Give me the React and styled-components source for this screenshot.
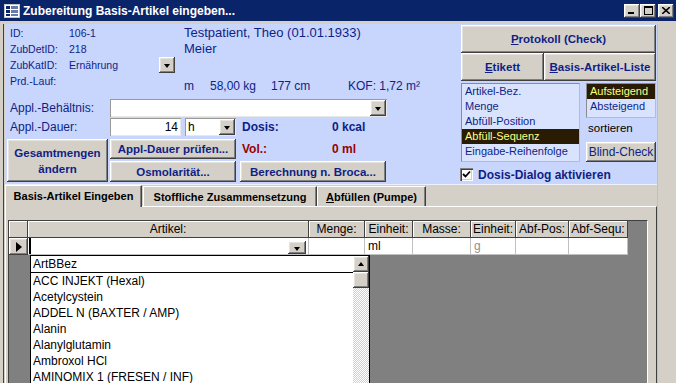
import React from "react";
import styled, { createGlobalStyle, css } from "styled-components";

const Global = createGlobalStyle`
  html, body { margin: 0; padding: 0; background: #d4d0c8; overflow: hidden; }
  * { box-sizing: border-box; }
`;

const NAVY = "#0f1f86";
const BLUE_BG = "#c8d5fd";
const LIST_BG = "#d9e3fd";

const raised = css`
  background: #d4d0c8;
  box-shadow: inset -1px -1px #404040, inset 1px 1px #fff, inset -2px -2px #808080, inset 2px 2px #e6e3dc;
`;

const Window = styled.div`
  width: 676px;
  height: 383px;
  overflow: hidden;
  display: flex;
  flex-direction: column;
  font-family: "Liberation Sans", Arial, sans-serif;
  background: #d4d0c8;
`;

const TitleBar = styled.div`
  height: 21px;
  flex: none;
  display: flex;
  align-items: center;
  padding: 0 2px 0 4px;
  background: #0a246a;
  color: #fff;
  font: bold 12px "Liberation Sans", Arial, sans-serif;
`;

const TitleText = styled.span`
  margin-left: 3px;
  flex: 1;
  white-space: nowrap;
`;

const WinButton = styled.div`
  ${raised};
  width: 16px;
  height: 14px;
  display: flex;
  align-items: center;
  justify-content: center;
  margin-left: ${(p) => p.$gap || 0}px;
`;

const Frame = styled.div`
  flex: 1;
  min-height: 0;
  display: flex;
  padding: 3px 0 0 3px;
`;

const Client = styled.div`
  width: 654px;
  border-left: 1px solid #404040;
  padding-left: 1px;
  display: flex;
  flex-direction: column;
`;

const RightStrip = styled.div`
  flex: 1;
  border-left: 1px solid #c4c0b8;
`;

const Header = styled.div`
  height: 161px;
  flex: none;
  display: flex;
  background: ${BLUE_BG};
  border-bottom: 1px solid #eef1fb;
`;

const LeftPane = styled.div`
  width: 456px;
  display: flex;
  flex-direction: column;
  padding-top: 1px;
`;

const InfoRow = styled.div`
  height: 73px;
  display: flex;
`;

const FieldGrid = styled.div`
  width: 174px;
  padding-left: 5px;
  display: grid;
  grid-template-columns: 59px 106px;
  grid-auto-rows: 16px;
  align-content: start;
  font-size: 10.5px;
  line-height: 16px;
  color: ${NAVY};
`;

const ValueCell = styled.div`
  display: flex;
  align-items: center;
  justify-content: space-between;
`;

const PatientCol = styled.div`
  margin-left: 5px;
  flex: 1;
  display: flex;
  flex-direction: column;
  color: ${NAVY};
  font-size: 13px;
  line-height: 16px;
  padding-bottom: 4px;
`;

const Stats = styled.div`
  margin-top: auto;
  display: flex;
  font-size: 12px;
`;

const Stat = styled.span`
  width: ${(p) => (p.$w ? `${p.$w}px` : "auto")};
  white-space: nowrap;
`;

const ApplRow = styled.div`
  height: 19px;
  display: flex;
  align-items: center;
`;

const Label = styled.span`
  width: 105px;
  padding-left: 5px;
  font-size: 12px;
  color: ${NAVY};
  white-space: nowrap;
`;

const Combo = styled.div`
  width: ${(p) => p.$w}px;
  height: 18px;
  margin-left: ${(p) => p.$ml || 0}px;
  display: flex;
  align-items: center;
  background: #fff;
  box-shadow: inset 1px 1px #9a9a9a, inset -1px -1px #e8e8e8;
`;

const ComboText = styled.span`
  flex: 1;
  padding: 0 3px;
  font-size: 12px;
  color: #000;
  text-align: ${(p) => p.$align || "left"};
`;

const DropBtn = styled.div`
  ${raised};
  width: ${(p) => p.$w || 16}px;
  height: ${(p) => p.$h || 16}px;
  flex: none;
  margin: ${(p) => p.$m ?? 1}px;
  display: flex;
  align-items: center;
  justify-content: center;
  &::after {
    content: "";
    border-left: 3.5px solid transparent;
    border-right: 3.5px solid transparent;
    border-top: 4px solid #000;
    margin-top: 2px;
  }
`;

const Value = styled.span`
  width: ${(p) => (p.$w ? `${p.$w}px` : "auto")};
  margin-left: ${(p) => p.$ml || 0}px;
  font-weight: bold;
  font-size: 12px;
  color: ${(p) => p.$color || NAVY};
  white-space: nowrap;
`;

const ButtonsRow = styled.div`
  margin-top: 3px;
  height: 43px;
  display: flex;
  padding-left: 2px;
  gap: 2px;
`;

const Stack = styled.div`
  width: ${(p) => p.$w}px;
  margin-left: ${(p) => p.$ml || 0}px;
  display: flex;
  flex-direction: column;
  justify-content: space-between;
`;

const Btn = styled.div`
  ${raised};
  width: ${(p) => (p.$w ? `${p.$w}px` : "auto")};
  height: ${(p) => p.$h}px;
  flex: none;
  margin-top: ${(p) => p.$mt || 0}px;
  display: flex;
  align-items: center;
  justify-content: center;
  text-align: center;
  font-weight: ${(p) => (p.$plain ? "normal" : "bold")};
  font-size: ${(p) => (p.$plain ? "12px" : "11.5px")};
  line-height: 16px;
  color: ${NAVY};
  white-space: nowrap;
`;

const VolRow = styled.div`
  height: 20px;
  display: flex;
  align-items: center;
  padding-left: 2px;
`;

const RightPane = styled.div`
  width: 195px;
  display: flex;
  flex-direction: column;
  padding-top: 1px;
`;

const Row = styled.div`
  display: flex;
  margin-top: ${(p) => p.$mt || 0}px;
`;

const ListBox = styled.div`
  width: ${(p) => p.$w}px;
  height: ${(p) => p.$h}px;
  flex: none;
  background: ${LIST_BG};
  border: 1px solid #8c8c8c;
  border-right-color: #bcbcbc;
  border-bottom-color: #bcbcbc;
`;

const ListItem = styled.div`
  height: 15px;
  line-height: 15px;
  padding-left: 3px;
  font-size: 11px;
  white-space: nowrap;
  color: ${(p) => (p.$sel ? "#ffff80" : NAVY)};
  background: ${(p) => (p.$sel ? "#2a1c04" : "transparent")};
`;

const SortCol = styled.div`
  width: 70px;
  margin-left: 6px;
  display: flex;
  flex-direction: column;
`;

const SortText = styled.div`
  height: 16px;
  margin-top: 2px;
  line-height: 16px;
  padding-left: 2px;
  font-size: 11.5px;
  color: #000;
`;

const CheckRow = styled.div`
  margin-top: 6px;
  height: 13px;
  display: flex;
  align-items: center;
  margin-left: -1px;
`;

const CheckBox = styled.div`
  width: 13px;
  height: 13px;
  flex: none;
  background: #fff;
  box-shadow: inset 1px 1px #808080, inset 2px 2px #404040, inset -1px -1px #fff, inset -2px -2px #d4d0c8;
  display: flex;
  align-items: center;
  justify-content: center;
`;

const CheckLabel = styled.span`
  margin-left: 5px;
  font-weight: bold;
  font-size: 12px;
  color: ${NAVY};
  white-space: nowrap;
`;

const TabStrip = styled.div`
  height: 21px;
  flex: none;
  display: flex;
  align-items: flex-end;
`;

const Tab = styled.div`
  width: ${(p) => p.$w}px;
  height: ${(p) => (p.$active ? 22 : 20)}px;
  margin-left: ${(p) => p.$ml || 0}px;
  margin-bottom: ${(p) => (p.$active ? -1 : 0)}px;
  position: relative;
  z-index: ${(p) => (p.$active ? 1 : 0)};
  background: #d4d0c8;
  border-top: 1px solid #fff;
  border-left: 1px solid #fff;
  border-right: 1px solid #404040;
  box-shadow: inset -1px 0 #808080;
  display: flex;
  align-items: center;
  justify-content: center;
  padding-bottom: ${(p) => (p.$active ? 2 : 0)}px;
  font-weight: bold;
  font-size: 11px;
  color: #000;
  white-space: nowrap;
`;

const Panel = styled.div`
  flex: 1;
  min-height: 0;
  display: flex;
  flex-direction: column;
  border-top: 1px solid #fff;
  border-left: 1px solid #fff;
  border-right: 1px solid #404040;
  padding: 13px 8px 0 2px;
`;

const Sheet = styled.div`
  flex: 1;
  position: relative;
  background: #808080;
  border-left: 1px solid #404040;
  border-top: 1px solid #404040;
  border-right: 1px solid #fff;
`;

const SheetGrid = styled.div`
  display: grid;
  grid-template-columns: 19px 281px 56px 48px 58px 45px 53px 59px;
  grid-auto-rows: 17px;
  width: max-content;
  font-size: 12px;
  line-height: 16px;
`;

const HeadCell = styled.div`
  background: #d4d0c8;
  border-right: 1px solid #404040;
  border-bottom: 1px solid #404040;
  box-shadow: inset 1px 1px #fff;
  text-align: center;
  color: #000;
  white-space: nowrap;
  overflow: hidden;
`;

const Cell = styled.div`
  background: #fff;
  border-right: 1px solid #c0c0c0;
  border-bottom: 1px solid #c0c0c0;
  padding-left: ${(p) => p.$pl ?? 3}px;
  color: ${(p) => p.$color || "#000"};
  white-space: nowrap;
  display: flex;
  align-items: center;
`;

const Selector = styled.div`
  ${raised};
  display: flex;
  align-items: center;
  justify-content: center;
  &::after {
    content: "";
    border-top: 5px solid transparent;
    border-bottom: 5px solid transparent;
    border-left: 6px solid #000;
    margin-left: 1px;
  }
`;

const Caret = styled.span`
  width: 2px;
  align-self: stretch;
  background: #000;
  margin-left: -1px;
  flex: none;
`;

const CellDrop = styled(DropBtn)`
  align-self: flex-end;
  margin: 0 2px 0 auto;
`;

const DropList = styled.div`
  position: absolute;
  left: 21px;
  top: 34px;
  width: 340px;
  height: 140px;
  display: flex;
  background: #fff;
  border: 1px solid #000;
  font-size: 12px;
  color: #000;
`;

const DropItems = styled.div`
  flex: 1;
`;

const DropHead = styled.div`
  height: 17px;
  line-height: 16px;
  padding-left: 2px;
  border-bottom: 1px solid #000;
`;

const DropItem = styled.div`
  height: 16px;
  line-height: 16px;
  padding-left: 2px;
  white-space: nowrap;
`;

const ScrollBar = styled.div`
  width: 16px;
  display: flex;
  flex-direction: column;
  background: repeating-conic-gradient(#fff 0 25%, #d4d0c8 0 50%) 0 0 / 2px 2px;
`;

const ScrollBtn = styled.div`
  ${raised};
  width: 16px;
  height: 16px;
  display: flex;
  align-items: center;
  justify-content: center;
  ${(p) =>
    p.$arrow &&
    css`
      &::after {
        content: "";
        border-left: 3.5px solid transparent;
        border-right: 3.5px solid transparent;
        border-bottom: 4px solid #000;
      }
    `}
`;

const FormIcon = () => (
  <svg width="16" height="14" viewBox="0 0 16 14">
    <rect x="0.5" y="0.5" width="15" height="13" fill="#fff" stroke="#c8c8c8" />
    <rect x="2" y="2" width="4" height="3" fill="#0a246a" />
    <rect x="7" y="2" width="7" height="3" fill="#6a7aa8" />
    <rect x="2" y="6" width="4" height="3" fill="#0a246a" />
    <rect x="7" y="6" width="7" height="3" fill="#6a7aa8" />
    <rect x="2" y="10" width="4" height="2" fill="#0a246a" />
    <rect x="7" y="10" width="7" height="2" fill="#6a7aa8" />
  </svg>
);

const articles = [
  "ACC INJEKT (Hexal)",
  "Acetylcystein",
  "ADDEL N (BAXTER / AMP)",
  "Alanin",
  "Alanylglutamin",
  "Ambroxol HCl",
  "AMINOMIX 1 (FRESEN / INF)",
];

const sortFields = ["Artikel-Bez.", "Menge", "Abfüll-Position", "Abfüll-Sequenz", "Eingabe-Reihenfolge"];

const columns = ["", "Artikel:", "Menge:", "Einheit:", "Masse:", "Einheit:", "Abf-Pos:", "Abf-Sequ:"];

export default function App() {
  return (
    <Window>
      <Global />
      <TitleBar>
        <FormIcon />
        <TitleText>Zubereitung Basis-Artikel eingeben...</TitleText>
        <WinButton>
          <svg width="8" height="7" viewBox="0 0 8 7">
            <rect x="0" y="5" width="6" height="2" fill="#000" />
          </svg>
        </WinButton>
        <WinButton>
          <svg width="9" height="9" viewBox="0 0 9 9">
            <rect x="0.5" y="0.5" width="8" height="8" fill="none" stroke="#000" />
            <rect x="0" y="0" width="9" height="2" fill="#000" />
          </svg>
        </WinButton>
        <WinButton $gap={2}>
          <svg width="8" height="7" viewBox="0 0 8 7">
            <path d="M0 0 L8 7 M8 0 L0 7" stroke="#000" strokeWidth="1.6" />
          </svg>
        </WinButton>
      </TitleBar>
      <Frame>
        <Client>
          <Header>
            <LeftPane>
              <InfoRow>
                <FieldGrid>
                  <span>ID:</span>
                  <span>106-1</span>
                  <span>ZubDetID:</span>
                  <span>218</span>
                  <span>ZubKatID:</span>
                  <ValueCell>
                    <span>Ernährung</span>
                    <DropBtn $m={0} />
                  </ValueCell>
                  <span>Prd.-Lauf:</span>
                  <span />
                </FieldGrid>
                <PatientCol>
                  <span>Testpatient, Theo (01.01.1933)</span>
                  <span>Meier</span>
                  <Stats>
                    <Stat $w={26}>m</Stat>
                    <Stat $w={61}>58,00 kg</Stat>
                    <Stat $w={77}>177 cm</Stat>
                    <Stat>KOF: 1,72 m²</Stat>
                  </Stats>
                </PatientCol>
              </InfoRow>
              <ApplRow>
                <Label>Appl.-Behältnis:</Label>
                <Combo $w={277}>
                  <ComboText />
                  <DropBtn />
                </Combo>
              </ApplRow>
              <ApplRow>
                <Label>Appl.-Dauer:</Label>
                <Combo $w={71}>
                  <ComboText $align="right">14</ComboText>
                </Combo>
                <Combo $w={51} $ml={4}>
                  <ComboText>h</ComboText>
                  <DropBtn />
                </Combo>
                <Value $w={90} $ml={6}>Dosis:</Value>
                <Value>0 kcal</Value>
              </ApplRow>
              <ButtonsRow>
                <Btn $w={101} $h={43}>
                  Gesamtmengen
                  <br />
                  ändern
                </Btn>
                <Stack $w={126}>
                  <Btn $h={20}>Appl-Dauer prüfen...</Btn>
                  <Btn $h={21}>Osmolarität...</Btn>
                </Stack>
                <Stack $w={146} $ml={2}>
                  <VolRow>
                    <Value $w={90} $color="#990000">Vol.:</Value>
                    <Value $color="#990000">0 ml</Value>
                  </VolRow>
                  <Btn $h={21}>Berechnung n. Broca...</Btn>
                </Stack>
              </ButtonsRow>
            </LeftPane>
            <RightPane>
              <Btn $h={28}>
                <span>
                  <u>P</u>rotokoll (Check)
                </span>
              </Btn>
              <Row>
                <Btn $w={83} $h={28}>
                  <span>
                    <u>E</u>tikett
                  </span>
                </Btn>
                <Btn $w={112} $h={28}>
                  <span>
                    <u>B</u>asis-Artikel-Liste
                  </span>
                </Btn>
              </Row>
              <Row $mt={2}>
                <ListBox $w={119} $h={79}>
                  {sortFields.map((f) => (
                    <ListItem key={f} $sel={f === "Abfüll-Sequenz"}>
                      {f}
                    </ListItem>
                  ))}
                </ListBox>
                <SortCol>
                  <ListBox $w={70} $h={35}>
                    <ListItem $sel>Aufsteigend</ListItem>
                    <ListItem>Absteigend</ListItem>
                  </ListBox>
                  <SortText>sortieren</SortText>
                  <Btn $h={20} $mt={6} $plain>
                    Blind-Check
                  </Btn>
                </SortCol>
              </Row>
              <CheckRow>
                <CheckBox>
                  <svg width="9" height="9" viewBox="0 0 9 9">
                    <path d="M1 4 L3.5 6.5 L8 1.5" fill="none" stroke="#000" strokeWidth="1.8" />
                  </svg>
                </CheckBox>
                <CheckLabel>Dosis-Dialog aktivieren</CheckLabel>
              </CheckRow>
            </RightPane>
          </Header>
          <TabStrip>
            <Tab $w={137} $active>
              Basis-Artikel Eingeben
            </Tab>
            <Tab $w={174} $ml={1}>
              Stoffliche Zusammensetzung
            </Tab>
            <Tab $w={109}>
              <span>
                <u>A</u>bfüllen (Pumpe)
              </span>
            </Tab>
          </TabStrip>
          <Panel>
            <Sheet>
              <SheetGrid>
                {columns.map((c, i) => (
                  <HeadCell key={i}>{c}</HeadCell>
                ))}
                <Selector />
                <Cell $pl={2}>
                  <Caret />
                  <CellDrop $w={18} $h={13} />
                </Cell>
                <Cell />
                <Cell>ml</Cell>
                <Cell />
                <Cell $color="#909090">g</Cell>
                <Cell />
                <Cell />
              </SheetGrid>
              <DropList>
                <DropItems>
                  <DropHead>ArtBBez</DropHead>
                  {articles.map((a) => (
                    <DropItem key={a}>{a}</DropItem>
                  ))}
                </DropItems>
                <ScrollBar>
                  <ScrollBtn $arrow />
                  <ScrollBtn />
                </ScrollBar>
              </DropList>
            </Sheet>
          </Panel>
        </Client>
        <RightStrip />
      </Frame>
    </Window>
  );
}
